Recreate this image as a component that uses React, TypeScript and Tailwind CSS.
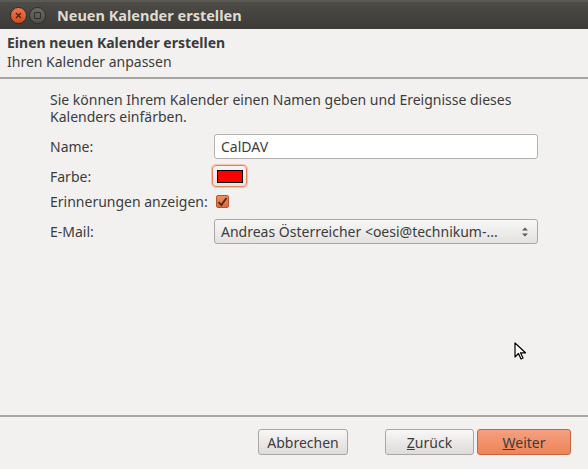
import React from "react";

const font = { fontFamily: '"Noto Sans", "DejaVu Sans", sans-serif' };

export default function App() {
  return (
    <div
      className="relative w-[588px] h-[469px] flex flex-col bg-[#f2f1f0] text-[#3c3c3c] overflow-hidden"
      style={font}
    >
      {/* Title bar */}
      <div className="h-[29px] flex items-center bg-gradient-to-b from-[#4d4c47] to-[#3b3a36] border-t-2 border-[#5a5954]">
        <div className="ml-[10px] w-[17px] h-[17px] rounded-full bg-gradient-to-b from-[#f2774b] to-[#d9471b] border border-[#2e2d2a] flex items-center justify-center">
          <svg width="7" height="7" viewBox="0 0 7 7">
            <path d="M1 1 L6 6 M6 1 L1 6" stroke="#3a2a22" strokeWidth="1.4" />
          </svg>
        </div>
        <div className="ml-[2px] w-[17px] h-[17px] rounded-full bg-gradient-to-b from-[#6a6964] to-[#52514c] border border-[#2e2d2a] flex items-center justify-center">
          <div className="w-[7px] h-[7px] border border-[#2f2e2b] rounded-[1px]" />
        </div>
        <div className="ml-[11px] text-[14.5px] font-bold text-[#dfdbd2] leading-none">
          Neuen Kalender erstellen
        </div>
      </div>

      {/* Header */}
      <div className="h-[50px] px-[7px] pt-[4px] border-b-2 border-[#a8a6a1]">
        <div className="text-[14px] font-bold leading-[19px]">Einen neuen Kalender erstellen</div>
        <div className="text-[14px] leading-[19px]">Ihren Kalender anpassen</div>
      </div>

      {/* Content */}
      <div className="flex-1 pl-[50px] pt-[12px]">
        <div className="text-[14px] leading-[17px] w-[470px]">
          Sie können Ihrem Kalender einen Namen geben und Ereignisse dieses Kalenders einfärben.
        </div>
        <div className="mt-[9px] flex items-center h-[25px]">
          <div className="w-[164px] text-[14px]">Name:</div>
          <div className="w-[324px] h-[25px] bg-white border border-[#b3b1ac] rounded-[3px] flex items-center px-[6px] text-[14px]">
            CalDAV
          </div>
        </div>
        <div className="mt-[6px] flex items-center h-[22px]">
          <div className="w-[162px] text-[14px]">Farbe:</div>
          <div className="w-[35px] h-[22px] rounded-[4px] border border-[#e5825c] bg-gradient-to-b from-[#f6f5f4] to-[#e6e4e1] flex items-center justify-center shadow-[0_0_0_1px_#f3c3ae]">
            <div className="w-[26px] h-[13px] bg-[#ff0000] border border-black" />
          </div>
        </div>
        <div className="mt-[6px] flex items-center h-[17px]">
          <div className="w-[166px] text-[14px]">Erinnerungen anzeigen:</div>
          <div className="w-[13px] h-[13px] rounded-[2px] border border-[#b2562f] bg-gradient-to-b from-[#f08c63] to-[#dc6a3c] flex items-center justify-center">
            <svg width="11" height="10" viewBox="0 0 11 10">
              <path d="M1.5 5 L4.3 8 L9.5 1" stroke="#4a2616" strokeWidth="1.8" fill="none" />
            </svg>
          </div>
        </div>
        <div className="mt-[9px] flex items-center h-[25px]">
          <div className="w-[164px] text-[14px]">E-Mail:</div>
          <div className="w-[324px] h-[25px] border border-[#a9a7a2] rounded-[3px] bg-gradient-to-b from-[#f7f7f6] to-[#e4e2df] flex items-center pl-[6px] pr-[8px] text-[14px]">
            <span className="flex-1 whitespace-nowrap overflow-hidden">Andreas Österreicher &lt;oesi@technikum-...</span>
            <svg width="8" height="12" viewBox="0 0 8 12">
              <path d="M1 4.5 L4 1.5 L7 4.5 Z M1 7.5 L4 10.5 L7 7.5 Z" fill="#5d5b57" />
            </svg>
          </div>
        </div>
      </div>

      {/* Footer */}
      <div className="h-[54px] border-t-2 border-[#a8a6a1] flex items-start pt-[12px] pr-[17px]">
        <div className="ml-[258px] w-[90px] h-[26px] rounded-[3px] border border-[#a9a7a2] bg-gradient-to-b from-[#f7f7f6] to-[#dedcd9] flex items-center justify-center text-[14px]">
          Abbrechen
        </div>
        <div className="ml-[37px] w-[89px] h-[26px] rounded-[3px] border border-[#a9a7a2] bg-gradient-to-b from-[#f7f7f6] to-[#dedcd9] flex items-center justify-center text-[14px]">
          <span><span className="underline">Z</span>urück</span>
        </div>
        <div className="ml-[3px] w-[94px] h-[26px] rounded-[3px] border border-[#c2673f] bg-gradient-to-b from-[#f4a07f] to-[#ed8458] flex items-center justify-center text-[14px]">
          <span><span className="underline">W</span>eiter</span>
        </div>
      </div>

      {/* Mouse cursor */}
      <svg className="absolute left-[514px] top-[342px]" width="14" height="20" viewBox="0 0 14 20">
        <path d="M1 1 L1 15 L4.5 11.5 L7 17 L9 16 L6.5 10.8 L11.5 10.8 Z" fill="white" stroke="black" strokeWidth="1.2" strokeLinejoin="round" />
      </svg>
    </div>
  );
}
